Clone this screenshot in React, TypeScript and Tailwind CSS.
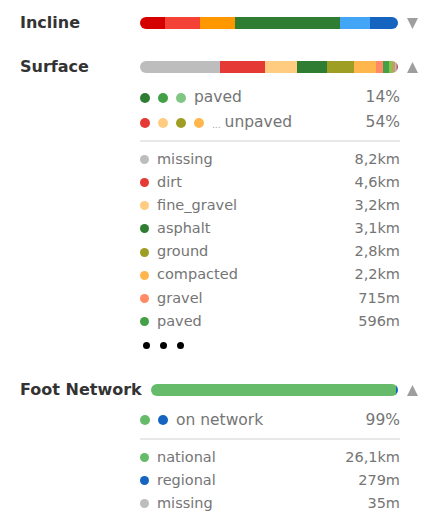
type Seg = { color: string; w: number };
type Item = { color: string; label: string; value: string };

const font = { fontFamily: '"DejaVu Sans", Verdana, sans-serif' };

const inclineBar: Seg[] = [
  { color: "#d50000", w: 25 },
  { color: "#f44336", w: 35 },
  { color: "#ff9800", w: 35 },
  { color: "#2e7d32", w: 105 },
  { color: "#42a5f5", w: 30 },
  { color: "#1565c0", w: 28 },
];

const surfaceBar: Seg[] = [
  { color: "#bdbdbd", w: 80 },
  { color: "#e53935", w: 45 },
  { color: "#ffcc80", w: 32 },
  { color: "#2e7d32", w: 30 },
  { color: "#9e9d24", w: 27 },
  { color: "#ffb74d", w: 22 },
  { color: "#ff8a65", w: 7 },
  { color: "#43a047", w: 6 },
  { color: "#8bc34a", w: 3 },
  { color: "#c0a060", w: 3 },
  { color: "#bdbdbd", w: 1 },
  { color: "#9e9e9e", w: 1 },
  { color: "#e53935", w: 1 },
];

const footBar: Seg[] = [
  { color: "#66bb6a", w: 246 },
  { color: "#1565c0", w: 2.5 },
];

const surfaceItems: Item[] = [
  { color: "#bdbdbd", label: "missing", value: "8,2km" },
  { color: "#e53935", label: "dirt", value: "4,6km" },
  { color: "#ffcc80", label: "fine_gravel", value: "3,2km" },
  { color: "#2e7d32", label: "asphalt", value: "3,1km" },
  { color: "#9e9d24", label: "ground", value: "2,8km" },
  { color: "#ffb74d", label: "compacted", value: "2,2km" },
  { color: "#ff8a65", label: "gravel", value: "715m" },
  { color: "#43a047", label: "paved", value: "596m" },
];

const footItems: Item[] = [
  { color: "#66bb6a", label: "national", value: "26,1km" },
  { color: "#1565c0", label: "regional", value: "279m" },
  { color: "#bdbdbd", label: "missing", value: "35m" },
];

function Triangle({ up }: { up?: boolean }) {
  return (
    <svg width="11" height="11" viewBox="0 0 11 11" className="ml-[9px] shrink-0">
      <polygon points={up ? "5.5,0 11,11 0,11" : "0,0 11,0 5.5,11"} fill="#9e9e9e" />
    </svg>
  );
}

function Header({ title, bar, up }: { title: string; bar: Seg[]; up?: boolean }) {
  return (
    <div className="flex h-[24px] items-center px-[20px] pr-[23px]">
      <div className="mr-[9px] min-w-[111px] text-[16px] font-bold text-[#333333]">{title}</div>
      <div className="flex h-[12px] flex-1 overflow-hidden rounded-full">
        {bar.map((s, i) => (
          <div key={i} className="h-full" style={{ flex: `${s.w} ${s.w} 0px`, background: s.color }} />
        ))}
      </div>
      <Triangle up={up} />
    </div>
  );
}

function Dot({ color, size = 10 }: { color: string; size?: number }) {
  return (
    <span
      className="mr-[8px] inline-block shrink-0 rounded-full"
      style={{ width: size, height: size, background: color }}
    />
  );
}

function LegendRow({ dots, label, value, more }: { dots: string[]; label: string; value: string; more?: boolean }) {
  return (
    <div className="flex h-[25px] items-center text-[15.5px] text-[#757575]">
      {dots.map((c, i) => (
        <Dot key={i} color={c} />
      ))}
      {more && <span className="mr-[4px] self-end pb-[5px] text-[9px] leading-none text-[#9e9e9e]">...</span>}
      <span>{label}</span>
      <span className="ml-auto">{value}</span>
    </div>
  );
}

function List({ items }: { items: Item[] }) {
  return (
    <div>
      {items.map((it) => (
        <div key={it.label} className="flex h-[23.15px] items-center text-[14.5px] text-[#757575]">
          <Dot color={it.color} size={9} />
          <span>{it.label}</span>
          <span className="ml-auto">{it.value}</span>
        </div>
      ))}
    </div>
  );
}

export default function App() {
  return (
    <div className="h-[523px] w-[441px] overflow-hidden bg-white pt-[11px]" style={font}>
      <Header title="Incline" bar={inclineBar} />

      <div className="mt-[20px]">
        <Header title="Surface" bar={surfaceBar} up />
        <div className="ml-[140px] w-[260px]">
          <div className="mt-[6px]">
            <LegendRow dots={["#2e7d32", "#43a047", "#81c784"]} label="paved" value="14%" />
            <LegendRow dots={["#e53935", "#ffcc80", "#9e9d24", "#ffb74d"]} label="unpaved" value="54%" more />
          </div>
          <div className="mt-[5px] h-[2px] bg-[#e8e8e8]" />
          <div className="mt-[6px]">
            <List items={surfaceItems} />
          </div>
          <div className="ml-[3px] mt-[9px] flex h-[7px] gap-[10px]">
            <span className="h-[7px] w-[7px] rounded-full bg-black" />
            <span className="h-[7px] w-[7px] rounded-full bg-black" />
            <span className="h-[7px] w-[7px] rounded-full bg-black" />
          </div>
        </div>
      </div>

      <div className="mt-[29px]">
        <Header title="Foot Network" bar={footBar} up />
        <div className="ml-[140px] w-[260px]">
          <div className="mt-[5.5px]">
            <LegendRow dots={["#66bb6a", "#1565c0"]} label="on network" value="99%" />
          </div>
          <div className="mt-[5px] h-[2px] bg-[#e8e8e8]" />
          <div className="mt-[6.5px]">
            <List items={footItems} />
          </div>
        </div>
      </div>
    </div>
  );
}
